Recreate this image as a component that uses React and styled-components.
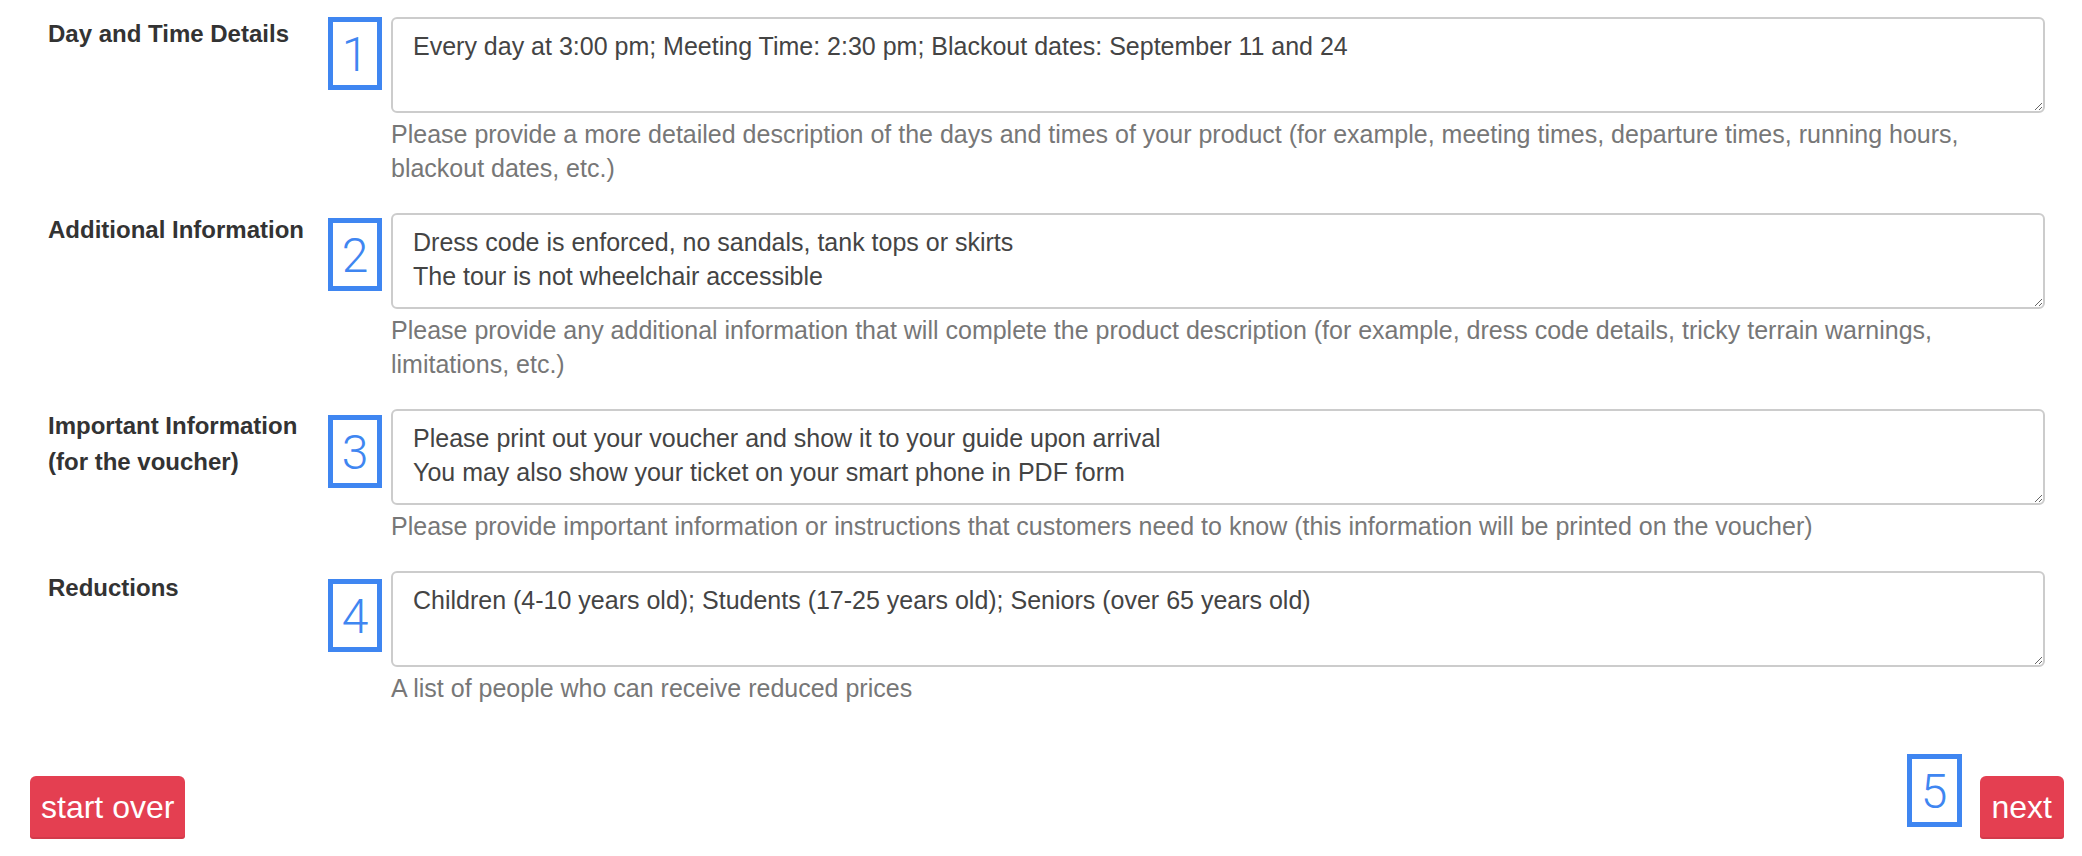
import React from "react";
import styled, { createGlobalStyle } from "styled-components";

const GlobalStyle = createGlobalStyle`
  html, body {
    margin: 0;
    padding: 0;
    background: #ffffff;
  }
  body {
    font-family: "Liberation Sans", Arial, Helvetica, sans-serif;
    color: #333333;
  }
  * { box-sizing: border-box; }
`;

const Page = styled.div`
  width: 2082px;
  padding: 17px 0 0 0;
`;

const Form = styled.form`
  display: flex;
  flex-direction: column;
`;

const Row = styled.div`
  display: grid;
  grid-template-columns: 280px 63px 1fr;
  align-items: start;
  padding: 0 37px 0 48px;
  margin-bottom: 28px;
`;

const Label = styled.label`
  font-size: 24px;
  font-weight: 700;
  line-height: 36px;
  color: #333333;
  margin-top: -1px;
  padding-right: 8px;
`;

const Marker = styled.div`
  width: 54px;
  height: 73px;
  margin-top: ${(p) => p.$shift || 0}px;
  border: 5px solid #3f86f1;
  background: #ffffff;
  color: #3f86f1;
  display: flex;
  align-items: center;
  justify-content: center;
  font-family: Roboto, "Liberation Sans", Arial, sans-serif;
  font-weight: 300;
  font-size: 48px;
  line-height: 1;
  padding-top: 2px;
`;

const Field = styled.div`
  display: flex;
  flex-direction: column;
  min-width: 0;
`;

const TextArea = styled.textarea`
  display: block;
  width: 100%;
  height: 96px;
  margin: 0;
  padding: 10px 20px;
  border: 2px solid #cccccc;
  border-radius: 6px;
  background: #ffffff;
  font-family: "Liberation Sans", Arial, Helvetica, sans-serif;
  font-size: 25px;
  line-height: 34px;
  color: #444444;
  resize: vertical;
  outline: none;
  overflow: hidden;
`;

const Help = styled.p`
  margin: 4px 0 0 0;
  font-size: 25px;
  line-height: 34px;
  color: #777777;
`;

const Footer = styled.div`
  display: flex;
  justify-content: space-between;
  align-items: flex-end;
  padding: 0 18px 0 30px;
  margin-top: 21px;
`;

const RightGroup = styled.div`
  display: flex;
  align-items: flex-end;
  gap: 18px;
`;

const FooterMarker = styled(Marker)`
  width: 55px;
  margin-bottom: 12px;
`;

const Button = styled.button`
  height: 63px;
  padding: 0 ${(p) => (p.$wide ? 11 : 12)}px;
  border: none;
  border-radius: 6px 6px 3px 3px;
  background: #e43f51;
  box-shadow: inset 0 -2px 0 rgba(0, 0, 0, 0.08);
  color: #ffffff;
  font-family: "Liberation Sans", Arial, Helvetica, sans-serif;
  font-size: 32px;
  line-height: 63px;
  cursor: pointer;
`;

const fields = [
  {
    label: "Day and Time Details",
    n: 1,
    shift: 0,
    value: "Every day at 3:00 pm; Meeting Time: 2:30 pm; Blackout dates: September 11 and 24",
    help:
      "Please provide a more detailed description of the days and times of your product (for example, meeting times, departure times, running hours, blackout dates, etc.)",
  },
  {
    label: "Additional Information",
    n: 2,
    shift: 5,
    value: "Dress code is enforced, no sandals, tank tops or skirts\nThe tour is not wheelchair accessible",
    help:
      "Please provide any additional information that will complete the product description (for example, dress code details, tricky terrain warnings, limitations, etc.)",
  },
  {
    label: "Important Information (for the voucher)",
    n: 3,
    shift: 6,
    value:
      "Please print out your voucher and show it to your guide upon arrival\nYou may also show your ticket on your smart phone in PDF form",
    help:
      "Please provide important information or instructions that customers need to know (this information will be printed on the voucher)",
  },
  {
    label: "Reductions",
    n: 4,
    shift: 8,
    value: "Children (4-10 years old); Students (17-25 years old); Seniors (over 65 years old)",
    help: "A list of people who can receive reduced prices",
  },
];

export default function App() {
  return (
    <Page>
      <GlobalStyle />
      <Form onSubmit={(e) => e.preventDefault()}>
        {fields.map((f) => (
          <Row key={f.n}>
            <Label>{f.label}</Label>
            <Marker $shift={f.shift}>{f.n}</Marker>
            <Field>
              <TextArea defaultValue={f.value} />
              <Help>{f.help}</Help>
            </Field>
          </Row>
        ))}
      </Form>
      <Footer>
        <Button type="button" $wide>
          start over
        </Button>
        <RightGroup>
          <FooterMarker>5</FooterMarker>
          <Button type="button">next</Button>
        </RightGroup>
      </Footer>
    </Page>
  );
}
